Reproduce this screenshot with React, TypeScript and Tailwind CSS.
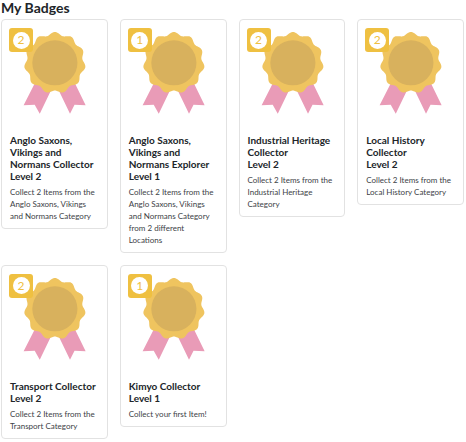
type Badge = {
  title: string;
  level: number;
  description: string;
};

const badges: Badge[] = [
  {
    title: "Anglo Saxons, Vikings and Normans Collector",
    level: 2,
    description: "Collect 2 Items from the Anglo Saxons, Vikings and Normans Category",
  },
  {
    title: "Anglo Saxons, Vikings and Normans Explorer",
    level: 1,
    description: "Collect 2 Items from the Anglo Saxons, Vikings and Normans Category from 2 different Locations",
  },
  {
    title: "Industrial Heritage Collector",
    level: 2,
    description: "Collect 2 Items from the Industrial Heritage Category",
  },
  {
    title: "Local History Collector",
    level: 2,
    description: "Collect 2 Items from the Local History Category",
  },
  {
    title: "Transport Collector",
    level: 2,
    description: "Collect 2 Items from the Transport Category",
  },
  {
    title: "Kimyo Collector",
    level: 1,
    description: "Collect your first Item!",
  },
];

// Outline of the rosette: a circle with 11 soft scallops, one at the top
function rosettePath(cx: number, cy: number, radius: number, depth: number) {
  const steps = 264;
  const points: string[] = [];
  for (let i = 0; i < steps; i++) {
    const angle = (i / steps) * Math.PI * 2;
    const r = radius + depth * Math.cos(11 * angle);
    const x = cx + r * Math.sin(angle);
    const y = cy - r * Math.cos(angle);
    points.push(`${x.toFixed(2)} ${y.toFixed(2)}`);
  }
  return `M${points.join("L")}Z`;
}

const rosette = rosettePath(45.5, 34.5, 29, 1.5);

function Medal() {
  return (
    <svg viewBox="0 0 90 90" className="w-full" aria-hidden="true">
      <path d="M26 54L14.5 76.5L25.5 76L30.5 85L44 57Z" fill="#e99bb7" />
      <path d="M65 54L76 76.5L65 76L60.5 85L47 57Z" fill="#e99bb7" />
      <path d={rosette} fill="#efc45f" />
      <circle cx="45.5" cy="34.5" r="22.4" fill="#d8b15d" />
    </svg>
  );
}

function BadgeCard({ badge }: { badge: Badge }) {
  return (
    <article className="rounded border border-[#e2e2e2] px-[7px] pt-2 pb-1.5">
      <div className="relative mb-[15px]">
        <Medal />
        <div className="absolute top-0 left-0 flex h-6 w-6 items-center justify-center rounded-[3px] bg-[#efc041]">
          <span className="flex h-[17px] w-[17px] items-center justify-center rounded-full bg-white text-[12px] leading-3 text-[#efc041]">
            {badge.level}
          </span>
        </div>
      </div>
      <div className="pl-px">
        <h2 className="text-[10px] leading-3 font-bold text-[#212529]">
          {badge.title}
          <br />
          Level {badge.level}
        </h2>
        <p className="mt-1 text-[8px] leading-3 text-[#3d4246]">{badge.description}</p>
      </div>
    </article>
  );
}

export default function App() {
  return (
    <main className="bg-white pr-0.5 pl-px font-['Lato','Open_Sans',sans-serif]">
      <h1 className="text-[14px] leading-4 font-bold text-[#212529]">My Badges</h1>
      <section className="mt-[3px] grid grid-cols-4 items-start gap-3">
        {badges.map((badge) => (
          <BadgeCard key={badge.title} badge={badge} />
        ))}
      </section>
    </main>
  );
}
